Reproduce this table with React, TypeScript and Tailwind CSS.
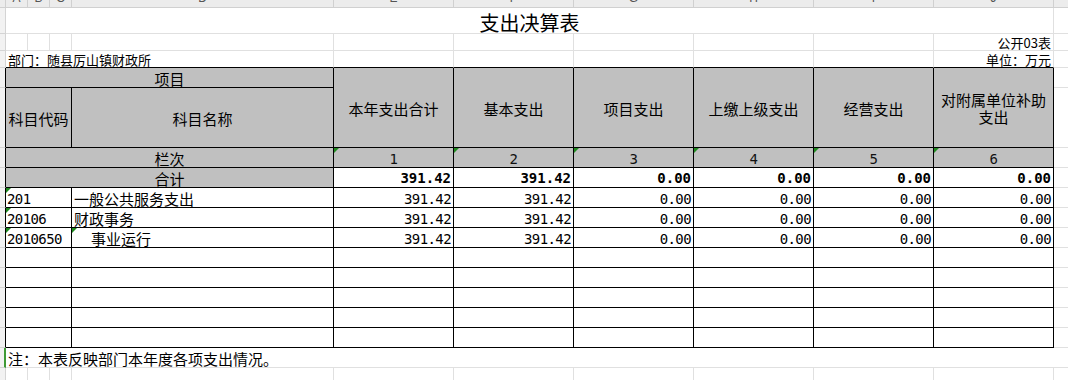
import React from "react";

const RH = "bg-[#f2f2f2] border-r border-b border-[#d4d4d4]";
const RHT = "bg-[#f2f2f2] border-b border-b-[#d4d4d4] border-r border-r-black";
const LC = "border-r border-b border-[#e0e0e0]";
const LK = "border-b border-[#e0e0e0]";
const LCB = "border-r border-r-[#e0e0e0] border-b border-b-black";
const BC = "border-r border-b border-black";
const NUM = "font-['DejaVu_Sans_Mono',monospace] text-[14px] tracking-[-0.6px] leading-[15px]";
const NUMB = "font-['DejaVu_Sans_Mono',monospace] text-[14px] font-bold leading-[15px]";

function Tri() {
  return (
    <span className="absolute left-0 top-0 w-0 h-0 border-t-[5px] border-r-[5px] border-t-[#1f8a1f] border-r-transparent" />
  );
}

const letters = ["A", "B", "C", "D", "E", "F", "G", "H", "I", "J"];

const heads = ["本年支出合计", "基本支出", "项目支出", "上缴上级支出", "经营支出"];

type Row = {
  code: string;
  name: string;
  indent?: boolean;
  nameTri?: boolean;
  vals: string[];
};

const rows: Row[] = [
  { code: "201", name: "一般公共服务支出", vals: ["391.42", "391.42", "0.00", "0.00", "0.00", "0.00"] },
  { code: "20106", name: "财政事务", vals: ["391.42", "391.42", "0.00", "0.00", "0.00", "0.00"] },
  { code: "2010650", name: "事业运行", indent: true, nameTri: true, vals: ["391.42", "391.42", "0.00", "0.00", "0.00", "0.00"] },
  { code: "", name: "", vals: ["", "", "", "", "", ""] },
  { code: "", name: "", vals: ["", "", "", "", "", ""] },
  { code: "", name: "", vals: ["", "", "", "", "", ""] },
  { code: "", name: "", vals: ["", "", "", "", "", ""] },
  { code: "", name: "", vals: ["", "", "", "", "", ""] },
];

export default function App() {
  return (
    <div className="w-[1068px] h-[380px] overflow-hidden bg-white text-black font-['Noto_Sans_CJK_SC',sans-serif] grid grid-cols-[6px_22px_22px_22px_262px_120px_120px_120px_120px_120px_120px_14px] grid-rows-[8px_26px_17px_17px_20px_60px_20px_20px_20px_20px_20px_20px_20px_20px_20px_20px_20px_20px]">
      {/* Row 1: column header strip */}
      <div className="bg-[#ececec] border-r border-b border-[#d0d0d0]" />
      {letters.map((l) => (
        <div key={l} className="relative overflow-hidden bg-[#ececec] border-r border-b border-[#d0d0d0]">
          <span className="absolute inset-x-0 top-[-8px] text-center font-['Liberation_Sans',sans-serif] text-[12px] leading-[12px] text-[#555]">
            {l}
          </span>
        </div>
      ))}
      <div className="bg-[#ececec] border-b border-[#d0d0d0]" />

      {/* Row 2: title */}
      <div className={RH} />
      <div className={`col-span-10 flex items-end justify-center text-[20px] leading-[20px] ${LC}`}>
        支出决算表
      </div>
      <div className={LK} />

      {/* Row 3 */}
      <div className={RH} />
      <div className={LC} />
      <div className={LC} />
      <div className={LC} />
      <div className={LC} />
      <div className={LC} />
      <div className={LC} />
      <div className={LC} />
      <div className={LC} />
      <div className={LC} />
      <div className={`flex items-end justify-end pr-[2px] text-[13px] leading-[14px] ${LC}`}>公开03表</div>
      <div className={LK} />

      {/* Row 4 */}
      <div className={RH} />
      <div className={`col-span-4 flex items-end pl-[2px] text-[13px] leading-[14px] whitespace-nowrap ${LCB}`}>
        部门：随县厉山镇财政所
      </div>
      <div className={LCB} />
      <div className={LCB} />
      <div className={LCB} />
      <div className={LCB} />
      <div className={LCB} />
      <div className={`flex items-end justify-end pr-[2px] text-[13px] leading-[14px] ${LCB}`}>单位：万元</div>
      <div className={LK} />

      {/* Row 5 */}
      <div className={RHT} />
      <div className={`col-span-4 bg-[#c0c0c0] flex items-center justify-center pt-[1px] text-[15px] leading-[17px] ${BC}`}>
        项目
      </div>
      {heads.map((h) => (
        <div key={h} className={`row-span-2 bg-[#c0c0c0] flex items-center justify-center pt-[1px] text-[15px] leading-[17px] ${BC}`}>
          {h}
        </div>
      ))}
      <div className={`row-span-2 bg-[#c0c0c0] flex flex-col items-center justify-center pt-[1px] text-[15px] leading-[17px] ${BC}`}>
        <span>对附属单位补助</span>
        <span>支出</span>
      </div>
      <div className={LK} />

      {/* Row 6 */}
      <div className={RHT} />
      <div className={`col-span-3 bg-[#c0c0c0] flex items-center justify-center pt-[2px] text-[15px] leading-[17px] ${BC}`}>
        科目代码
      </div>
      <div className={`bg-[#c0c0c0] flex items-center justify-center pt-[2px] text-[15px] leading-[17px] ${BC}`}>
        科目名称
      </div>
      <div className={LK} />

      {/* Row 7: 栏次 */}
      <div className={RHT} />
      <div className={`col-span-4 bg-[#c0c0c0] flex items-center justify-center pt-[1px] text-[15px] leading-[17px] ${BC}`}>
        栏次
      </div>
      {["1", "2", "3", "4", "5", "6"].map((n) => (
        <div key={n} className={`relative bg-[#c0c0c0] flex items-center justify-center pt-[3px] text-[#111] ${NUM} ${BC}`}>
          <Tri />
          {n}
        </div>
      ))}
      <div className={LK} />

      {/* Row 8: 合计 */}
      <div className={RHT} />
      <div className={`col-span-4 bg-[#c0c0c0] flex items-center justify-center pt-[1px] text-[15px] leading-[17px] ${BC}`}>
        合计
      </div>
      {["391.42", "391.42", "0.00", "0.00", "0.00", "0.00"].map((v, i) => (
        <div key={i} className={`flex items-center justify-end pr-[2px] pt-[2px] ${NUMB} ${BC}`}>
          {v}
        </div>
      ))}
      <div className={LK} />

      {/* Data rows */}
      {rows.map((r, ri) => (
        <React.Fragment key={ri}>
          <div className={RHT} />
          <div className={`relative col-span-3 flex items-center pl-[1px] pt-[3px] ${NUM} ${BC}`}>
            {r.code && <Tri />}
            {r.code}
          </div>
          <div
            className={`relative flex items-center pt-[1px] text-[15px] leading-[17px] ${r.indent ? "pl-[19px]" : "pl-[2px]"} ${BC}`}
          >
            {r.nameTri && <Tri />}
            {r.name}
          </div>
          {r.vals.map((v, i) => (
            <div key={i} className={`flex items-center justify-end pr-[2px] pt-[3px] ${NUM} ${BC}`}>
              {v}
            </div>
          ))}
          <div className={LK} />
        </React.Fragment>
      ))}

      {/* Note row */}
      <div className="bg-[#f2f2f2] border-b border-b-[#d4d4d4] border-r-2 border-r-[#3f9a35]" />
      <div className={`col-span-11 flex items-end pl-[2px] text-[15px] leading-[16px] ${LK}`}>
        注：本表反映部门本年度各项支出情况。
      </div>

      {/* Last row */}
      <div className={RH} />
      <div className={LC} />
      <div className={LC} />
      <div className={LC} />
      <div className={LC} />
      <div className={LC} />
      <div className={LC} />
      <div className={LC} />
      <div className={LC} />
      <div className={LC} />
      <div className={LC} />
      <div className={LK} />
    </div>
  );
}
